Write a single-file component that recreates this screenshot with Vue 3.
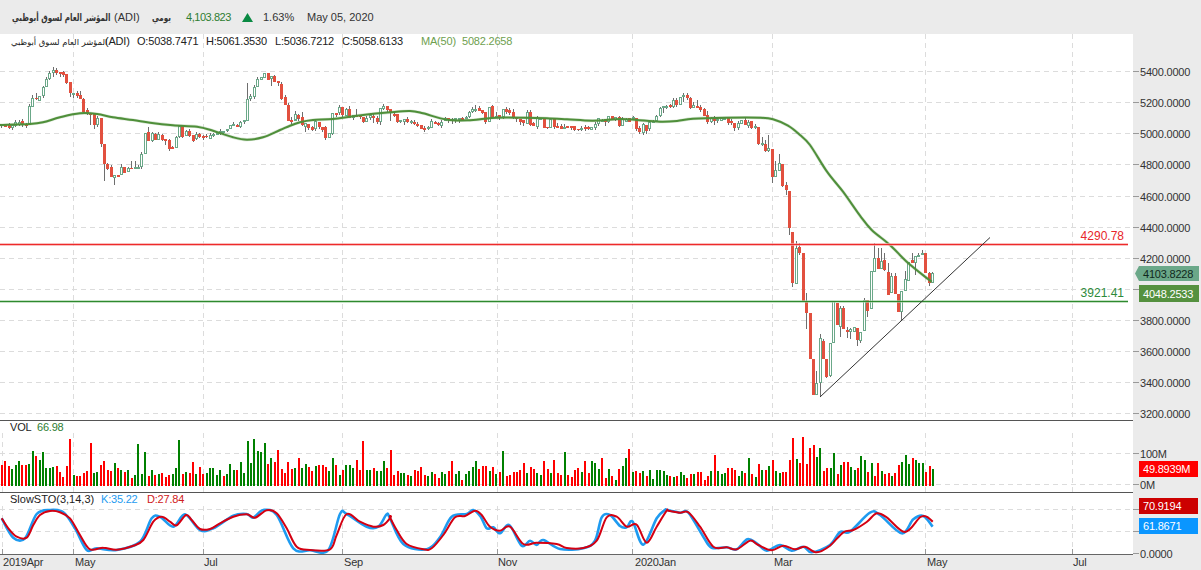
<script setup>
const AR = 'المؤشر العام لسوق أبوظبي'
const W = 1133

// --- candles, read in zoomed crops: colour X top bottom [wickTop wickBottom]
const segs = [
  { x0: 0, y0: 60, d: 'r 5 192 197,r 15 196 200,r 28 196 205,g 38 195 205,g 47 185 197,g 58 186 195,r 67 183 195 178 202,r 78 192 197 188 203,g 88 138 196,g 98 115 140 105 140,r 110 114 118 100 120,g 118 108 122 108 124,g 130 82 108,g 140 58 82,g 149 40 58,g 160 30 40 22 52,r 169 30 40,r 182 37 42 35 52,r 190 36 44 34 52,r 199 42 68,r 211 65 98 65 112,g 220 98 103 98 115,r 232 98 108,r 241 106 116 92 116,r 250 116 156,r 262 150 160 145 165,r 272 160 166 160 195,r 283 160 195 160 207,g 292 174 195,r 304 174 252 174 262,r 313 252 312 252 362,r 322 312 326,r 334 320 350,g 343 345 353 345 375,r 355 345 350 345 352,g 365 322 346 312 346,r 374 322 340,g 385 325 337,r 394 324 328 304 328,g 406 322 326 304 326,g 415 320 325,g 424 283 320,g 436 218 282,r 445 215 243 200 243,g 457 220 242,r 466 222 240,g 475 222 240,r 488 226 240,r 497 236 243 236 255,r 507 240 266,r 517 262 268,g 528 232 265,g 538 198 232,r 547 197 230,g 558 213 228,r 568 213 228,r 579 226 242 226 245,g 588 223 238,r 598 222 230,r 610 228 233,r 620 228 232,g 631 226 236,g 640 222 228,g 651 218 222,g 661 214 220,g 670 212 220,g 682 208 214,g 692 195 208,g 701 192 198,r 712 194 200,g 722 185 200,g 733 181 186,g 743 118 183 70 183,g 752 108 118,g 764 80 110,g 773 58 80,g 784 52 60,g 794 40 55 38 55,r 805 40 60,g 814 48 58 48 78,r 824 48 66,r 835 64 70 64 78,r 845 72 116,r 856 112 136,r 866 136 182,r 875 180 186 180 192,g 886 163 182 152 182,r 896 165 177' },
  { x0: 290, y0: 85, d: 'r 3 105 110 95 115,g 15 88 105 78 105,r 25 90 100,r 37 96 120 82 122,g 46 115 125 115 140,r 55 118 128,r 67 125 135 122 137,g 76 108 132,r 88 110 126,r 97 126 134,r 107 126 160,g 118 145 160,g 127 85 148,r 139 83 90,g 148 66 84,r 157 66 90 66 95,g 168 72 92,r 178 72 98 64 98,g 190 90 98,r 199 90 95 72 95,r 210 90 97,r 220 95 110 95 115,g 229 98 110,g 241 90 100,r 250 92 100 85 115,r 262 98 110,g 271 70 112 70 120,g 280 64 72,r 292 63 75,r 301 72 82 72 108,r 313 87 93,r 322 88 110 88 114,g 331 106 110,g 343 102 110 102 120,r 352 102 112,g 364 108 114,r 373 112 118,r 382 118 122,r 394 120 133,r 403 128 134,g 415 126 130,g 424 108 128,r 436 110 118,r 445 114 121,g 454 110 122,g 465 100 107,r 475 100 105 98 114,g 487 102 105 100 116,g 497 100 104 98 114,g 508 99 105 99 114,r 517 98 104,g 528 97 100,g 537 82 97,g 547 72 82,g 556 72 75 60 82,r 568 70 77,r 577 75 83,r 587 82 110,g 597 65 110' },
  { x0: 480, y0: 85, d: 'r 37 63 96,g 48 92 96 80 98,r 58 91 97 91 104,g 70 73 95,r 80 73 80,r 88 76 84,r 100 82 100 72 102,r 110 98 103 98 112,r 121 102 110 102 120,r 130 105 113 105 122,g 142 82 118,r 151 82 120,r 161 115 122 112 124,g 172 100 125,g 182 100 103,r 193 100 128,r 202 125 130 125 132,g 212 103 128,r 223 102 125,r 232 124 129 115 129,r 244 124 132 118 132,g 253 125 130 118 132,r 263 124 128,r 274 124 129,r 284 124 134 124 138,r 296 132 136,g 304 128 135,r 315 127 131,r 326 127 131,g 335 125 134,g 347 118 128,g 356 100 118,g 366 104 112,r 377 103 112 103 124,g 386 94 112,r 398 94 106,g 407 97 106,r 418 97 122,g 428 103 122,g 438 102 110,r 449 100 110,g 460 97 100,r 470 100 133,r 479 130 140,g 489 118 143,r 500 120 137 120 148,g 509 112 133,g 520 107 112,g 530 92 107,g 540 68 92,g 550 63 68 63 84,g 560 62 65,r 572 60 65,g 581 45 65 40 70' },
  { x0: 660, y0: 85, d: 'r 49 45 60,g 61 37 60 37 60,g 70 30 37 25 50,r 82 30 38,r 91 40 68,g 100 60 68 50 68,r 112 64 70 45 70,r 121 66 74,r 133 72 92,r 142 90 110 78 116,g 154 100 110 95 115,r 163 99 107 92 120,g 172 102 107 100 113,g 184 100 107 96 107,g 193 100 103 96 105,r 205 100 113,r 214 108 115,r 223 115 128 115 138,g 235 115 128,g 244 106 116,r 256 105 120,g 265 112 122,r 274 108 130 108 132,g 286 123 128 118 132,r 295 125 178 125 180,g 307 175 178 155 182,r 316 178 198 165 200,g 325 189 198 150 200,r 337 192 276 192 294,g 346 255 276 228 276,g 358 235 258 208 258,r 367 237 302 237 306,r 379 300 316 290 330,r 388 318 430 318 450' },
  { x0: 760, y0: 230, d: 'r 98 5 160 5 172,g 110 55 163 32 163,r 118 52 69 40 75,r 130 70 214 70 214,r 140 212 250 190 296,r 150 250 388 250 388,r 160 388 494 388 494,g 170 460 494 423 494,g 182 325 460 312 500,r 190 332 388 328 388,r 200 388 440 388 445,g 212 340 437 340 442,g 220 214 340 214 340,r 232 220 285 220 285,g 242 234 292 228 322,r 250 234 298 228 298,r 262 300 306 290 324,g 270 298 307 295 328,g 282 292 305 292 305,r 292 294 330 294 347,g 302 306 332 306 340,g 313 210 304 205 304,r 322 210 242 210 260,g 333 124 238 124 238,g 343 85 127 40 127,r 355 85 117 55 117,g 364 93 116 55 116,r 373 90 120 68 122,r 385 125 194 100 194,g 394 138 190 128 190,r 406 138 193 128 193,r 415 193 245 193 245,g 424 183 245 183 273,g 436 148 182 122 182,g 445 95 152 95 152,r 458 90 100 68 100,g 467 77 100 77 135,g 476 74 76 70 78,g 488 70 74 60 76,r 496 70 128 70 128,r 508 130 160 125 167,g 518 130 160 125 160' },
]

let seed = 7
function rnd() { seed = (seed * 16807) % 2147483647; return seed / 2147483647 }

const candles = []
for (const s of segs) {
  for (const tok of s.d.split(',')) {
    const [c, X, t, b, wt, wb] = tok.split(' ')
    const top = Math.round(s.y0 + t / 3)
    const bot = Math.round(s.y0 + b / 3)
    const px = Math.round(s.x0 + X / 3 - 0.5)
    const wTop = wt !== undefined ? Math.round(s.y0 + wt / 3) : top - Math.floor(rnd() * 3)
    const wBot = wb !== undefined ? Math.round(s.y0 + wb / 3) : bot + Math.floor(rnd() * 3)
    candles.push({ up: c === 'g', px, top, h: Math.max(bot - top, 1), wTop, wBot })
  }
}

// --- curves, read from crops as X Y pairs, then smoothed
function pts(x0, y0, str) {
  const n = str.trim().split(/\s+/).map(Number)
  const out = []
  for (let i = 0; i < n.length; i += 2) out.push([x0 + n[i] / 3, y0 + n[i + 1] / 3])
  return out
}
function smooth(p) {
  const f = (v) => v.toFixed(1)
  let d = `M${f(p[0][0])} ${f(p[0][1])}`
  for (let i = 0; i < p.length - 1; i++) {
    const a = p[Math.max(i - 1, 0)]
    const b = p[i]
    const c = p[i + 1]
    const e = p[Math.min(i + 2, p.length - 1)]
    d += `C${f(b[0] + (c[0] - a[0]) / 6)} ${f(b[1] + (c[1] - a[1]) / 6)} ${f(c[0] - (e[0] - b[0]) / 6)} ${f(c[1] - (e[1] - b[1]) / 6)} ${f(c[0])} ${f(c[1])}`
  }
  return d
}

const maPts = '0,125 30,124 43,122.3 60,117.3 80,113.3 97,114 113,117.3 133,120 150,122.7 173,125.3 197,126.7 213,130.7 233,137.3 247,139.7 263,137.3 280,130 290,125.7 300,122.3 313,120 333,119 357,115.7 390,112.3 410,111 423,113.3 447,119.7 470,120.3 480,119.3 497,117.7 523,117.7 547,118.3 567,119.3 593,120.7 620,119 637,120 660,121.7 677,121 693,118.7 727,117.7 760,117.7 773,119.3 788,125.7 800,135 810,145 827,171.7 843,191.7 860,215.7 871.7,230 890,245 906.7,261.7 928.3,279.3 931,281'
const maLine = smooth(maPts.split(' ').map((s) => s.split(',').map(Number)))

const kLine = smooth([
  ...pts(0, 415, '5 310 40 368 75 370 110 297 150 285 190 292 225 340 260 405 290 400 350 405 420 380 455 310 480 305 520 335 555 298 600 345 640 340 700 302 740 297 760 308 790 285 830 300 880 400 930 406 985 405 1020 297 1040 297 1100 335 1135 335 1160 298'),
  ...pts(390, 430, '0 265 40 342 110 358 150 322 185 260 230 252 250 240 272 260 290 295 310 292 330 310 358 285 395 347 420 332 440 345 460 330 510 357 580 355 615 332 635 262 660 255 690 288 710 292 728 275 760 344 800 265 825 240'),
  ...pts(660, 430, '20 240 60 248 85 248 130 320 155 353 200 352 230 358 262 328 290 340 320 362 360 345 395 362 430 350 455 367 510 345 540 306 570 305 630 248 660 255 725 310 760 268 790 258 818 290'),
])

const dLine = smooth([
  ...pts(0, 415, '5 310 25 340 50 365 80 368 100 330 120 300 150 288 180 292 210 310 240 360 270 403 310 398 350 404 400 392 430 375 460 320 485 305 510 320 530 331 558 300 575 315 600 342 630 342 660 325 700 305 740 298 765 308 800 286 830 295 860 340 890 395 930 405 990 403 1010 360 1040 297 1080 320 1120 335 1150 330 1172 307'),
  ...pts(390, 430, '0 262 20 300 50 342 100 358 125 355 160 315 195 262 225 258 255 242 275 255 300 290 330 302 360 290 400 342 440 338 500 342 530 354 580 354 620 332 650 262 680 260 710 290 740 284 770 338 800 290 830 242'),
  ...pts(660, 430, '25 242 60 248 85 247 120 290 160 350 200 352 230 358 270 332 295 345 335 361 370 347 405 358 435 350 470 367 510 347 550 307 580 300 620 276 650 250 680 262 735 306 780 262 800 260 818 275'),
])

// --- volume: colour + top Y in the crop
const volRows = [
  { base: 212, d: 'r150 r138 r152 g162 g150 g138 r148 r150 g145 g108 r123 g135 g111 g159 g159 g155 r153 r171 r186 r153 r72 g180 r183 r183 r172 r168 r84 g174 g171 r150 r138 r165 r168 g144 r159 g165 r171 g165 r189 g180 g87 g177 g111 r183 g165 r180 g177 r174 r186 r180 g177 g159 g75 r177 g171 r174 r141 g177 r156 r177 g174 g159 g159 g180 g165 r183 g177 g147 g165 r165 g141 g174 g78 g144 g72 g108 g111 g84 r147 g129 r141 r105 r162 r174 r141 r162 g159 r129 g159 g147 r156 r168 g153 r150 r150 r156 g168 g129 r150 g180 r165 g150 g150 g159 r135 r165 r78 g165 g165 r159 g168 g168 g138 r159 r105 r180 r168' },
  { base: 168, d: 'g129 g129 r135 g138 r120 r123 r111 r135 g138 g126 r132 r144 g126 g132 r123 r93 g132 g123 r150 g132 g123 g111 g93 r117 r108 r108 g123 r111 g132 r126 g63 r138 r135 r126 r126 r120 r99 g129 r111 r117 g129 g135 r93 r117 g129 r90 r129 r135 g66 r135 r141 r120 r114 g126 r93 r129 g93 g99 g117 r84 r144 g117 r138 g150 r117 g108 g84 r57 g126 r123 r129 g123 r138 g120 g147 g120 g120' },
  { base: 168, d: 'g123 g135 r138 g141 r138 g126 g135 r144 r132 g132 r126 r126 r150 r138 g123 r75 g123 g132 g129 r114 r114 r120 g138 g123 r129 g84 r132 g141 r102 g120 r120 g108 r90 g123 g129 r126 r126 r90 r24 g87 r99 r21 r102 r54 r45 g81 g54 r123 r114 g114 g69 r132 g105 r96 r96 g111 g120 r114 g78 g90 r126 g99 r138 r99 g123 r132 r129 g138 r129 r105 g96 g75 g102 r84 g90 g99 g99 r126 r108 g117' },
]
const volBottom = 486
const volTokens = volRows.flatMap((r) =>
  r.d.split(' ').map((t) => ({ up: t[0] === 'g', h: Math.max(1, Math.round((r.base - Number(t.slice(1))) / 3)) }))
)
const volStep = (932 - 1) / (volTokens.length - 1)
const bars = volTokens.map((b, i) => ({
  up: b.up,
  x: Math.round(1 + i * volStep),
  y: volBottom - b.h,
  h: b.h,
}))

// --- grids and axes
const vGrid = [2.5, 73.5, 203.5, 342.5, 497.5, 632.5, 772.5, 925.5, 1072.5]
const mainGrid = vGrid.slice(1)
const prices = [5400, 5200, 5000, 4800, 4600, 4400, 4200, 4000, 3800, 3600, 3400, 3200].map((p, i) => ({
  label: p.toFixed(4),
  y: Math.round(71 + 31.13 * i) + 0.5,
}))
const volAxis = [
  { label: '100M', y: 453.5 },
  { label: '0M', y: 484.5 },
]
const stoGrid = [509.5, 531.5]
const stoAxis = [
  { label: '', y: 509.5 },
  { label: '', y: 531.5 },
  { label: '0.0000', y: 553.5 },
]
const months = [
  { t: '2019Apr', x: 3 },
  { t: 'May', x: 75 },
  { t: 'Jul', x: 204 },
  { t: 'Sep', x: 344 },
  { t: 'Nov', x: 498 },
  { t: '2020Jan', x: 635 },
  { t: 'Mar', x: 774 },
  { t: 'May', x: 927 },
  { t: 'Jul', x: 1073 },
]
</script>

<template>
  <div class="page">
    <header class="topbar">
      <span class="name">{{ AR }}</span>
      <span class="code">(ADI)</span>
      <span class="period">يومي</span>
      <span class="last">4,103.823</span>
      <svg class="arrow" width="11" height="9" viewBox="0 0 11 9"><path d="M5.5 0 11 9H0Z" /></svg>
      <span class="pct">1.63%</span>
      <span class="date">May 05, 2020</span>
    </header>

    <!-- price pane -->
    <section class="pane main-pane">
      <svg class="plot" :width="W" height="386" :viewBox="`0 34 ${W} 386`">
        <line v-for="p in prices" :key="p.y" class="grid" x1="0" :x2="W" :y1="p.y" :y2="p.y" />
        <line v-for="x in mainGrid" :key="x" class="grid" :x1="x" :x2="x" y1="34" y2="420" />

        <g v-for="(c, i) in candles" :key="i">
          <line class="wick" :x1="c.px + 0.5" :x2="c.px + 0.5" :y1="c.wTop" :y2="c.wBot" />
          <rect v-if="c.up" class="up" :x="c.px - 0.5" :y="c.top + 0.5" width="2" :height="Math.max(c.h - 1, 1)" />
          <rect v-else class="down" :x="c.px - 1" :y="c.top" width="3" :height="c.h" />
        </g>

        <path class="ma-halo" :d="maLine" />
        <path class="ma" :d="maLine" />

        <rect class="fib-red-halo" x="0" y="243" width="1128" height="3" />
        <rect class="fib-red" x="0" y="244" width="1128" height="1" />
        <rect class="fib-green-halo" x="0" y="300" width="1128" height="3" />
        <rect class="fib-green" x="0" y="301" width="1128" height="1" />
        <line class="trend" x1="820" y1="397" x2="990" y2="237.5" />

        <text class="fib-txt red" x="1124" y="240" text-anchor="end">4290.78</text>
        <text class="fib-txt green" x="1124" y="297" text-anchor="end">3921.41</text>

        <text class="lg lg-ar" x="11" y="45">{{ AR }}</text>
        <text class="lg" x="105" y="45">(ADI)</text>
        <text class="lg" x="137" y="45">O:5038.7471</text>
        <text class="lg" x="206" y="45">H:5061.3530</text>
        <text class="lg" x="275" y="45">L:5036.7212</text>
        <text class="lg" x="342" y="45">C:5058.6133</text>
        <text class="lg ma-lg" x="421" y="45">MA(50)</text>
        <text class="lg ma-lg" x="462" y="45">5082.2658</text>
      </svg>
      <svg class="axis" width="68" height="386" :viewBox="`${W} 34 68 386`">
        <g v-for="p in prices" :key="p.y">
          <line class="tick" :x1="W" :x2="W + 6" :y1="p.y" :y2="p.y" />
          <text class="ax" :x="W + 7" :y="p.y + 4">{{ p.label }}</text>
        </g>
        <path class="tag-last" d="M1135 273.5 1139 266H1199V281H1139Z" />
        <text class="tag-txt dark" x="1143" y="277.5">4103.8228</text>
        <rect class="tag-ma" x="1139" y="285" width="60" height="17" />
        <text class="tag-txt" x="1143" y="297.5">4048.2533</text>
      </svg>
    </section>

    <!-- volume pane -->
    <section class="pane vol-pane">
      <svg class="plot" :width="W" height="72" :viewBox="`0 420 ${W} 72`">
        <line class="sep" x1="0" :x2="W" y1="420.5" y2="420.5" />
        <line v-for="a in volAxis" :key="a.y" class="grid" x1="0" :x2="W" :y1="a.y" :y2="a.y" />
        <line v-for="x in vGrid" :key="x" class="grid" :x1="x" :x2="x" y1="433" y2="492" />
        <rect v-for="(b, i) in bars" :key="i" :class="b.up ? 'vol-up' : 'vol-down'" :x="b.x" :y="b.y" width="2" :height="b.h" />
        <text class="lg" x="10" y="431">VOL</text>
        <text class="lg vol-val" x="37" y="431">66.98</text>
      </svg>
      <svg class="axis" width="68" height="72" :viewBox="`${W} 420 68 72`">
        <g v-for="a in volAxis" :key="a.y">
          <line class="tick" :x1="W" :x2="W + 6" :y1="a.y" :y2="a.y" />
          <text class="ax" :x="W + 7" :y="a.y + 4">{{ a.label }}</text>
        </g>
        <rect class="tag-red" x="1139" y="461" width="59" height="16" />
        <text class="tag-txt" x="1143" y="473">49.8939M</text>
      </svg>
    </section>

    <!-- stochastic pane -->
    <section class="pane sto-pane">
      <svg class="plot" :width="W" height="63" :viewBox="`0 492 ${W} 63`">
        <line class="sep" x1="0" :x2="W" y1="492.5" y2="492.5" />
        <line v-for="y in stoGrid" :key="y" class="grid" x1="0" :x2="W" :y1="y" :y2="y" />
        <line v-for="x in vGrid" :key="x" class="grid" :x1="x" :x2="x" y1="506" y2="550" />
        <line v-for="x in vGrid" :key="'t' + x" class="sto-tick" :x1="x" :x2="x" y1="549" y2="554" />
        <path class="k" :d="kLine" />
        <path class="d" :d="dLine" />
        <rect class="sep-rect" x="0" y="554" :width="W" height="1" />
        <text class="lg sto-name" x="10" y="503">SlowSTO(3,14,3)</text>
        <text class="lg k-lg" x="101" y="503">K:35.22</text>
        <text class="lg d-lg" x="147" y="503">D:27.84</text>
      </svg>
      <svg class="axis axis-over" width="68" height="63" :viewBox="`${W} 492 68 63`">
        <g v-for="a in stoAxis" :key="a.y">
          <line class="tick" :x1="W" :x2="W + 6" :y1="a.y" :y2="a.y" />
          <text v-if="a.label" class="ax" :x="W + 7" :y="a.y + 4">{{ a.label }}</text>
        </g>
        <rect class="tag-dred" x="1139" y="498" width="59" height="16" />
        <text class="tag-txt" x="1143" y="510">70.9194</text>
        <rect class="tag-blue" x="1139" y="518" width="59" height="16" />
        <text class="tag-txt" x="1143" y="530">61.8671</text>
      </svg>
    </section>

    <!-- time axis -->
    <svg class="xaxis" width="1201" height="15" viewBox="0 555 1201 15">
      <text v-for="m in months" :key="m.x" class="ax" :x="m.x" y="565.5">{{ m.t }}</text>
    </svg>
  </div>
</template>

<style scoped>
.page {
  width: 1201px;
  height: 570px;
  display: flex;
  flex-direction: column;
  overflow: hidden;
  background: #ebebeb;
  font-family: Tahoma, "Liberation Sans", "DejaVu Sans", sans-serif;
  font-size: 11px;
  color: #333;
}
.topbar {
  height: 34px;
  flex: none;
  display: flex;
  align-items: center;
  padding-left: 12px;
  font-size: 11px;
  color: #333;
}
.name,
.period {
  font-family: "DejaVu Sans", sans-serif;
  font-size: 10px;
  font-weight: bold;
  white-space: nowrap;
  transform-origin: left center;
  transform: scaleX(0.72);
}
.name { width: 98px; }
.period { width: 20px; margin-left: 12px; }
.code { margin-left: 4px; width: 26px; }
.last { margin-left: 14px; color: #2e7d32; letter-spacing: -0.45px; width: 46px; }
.arrow { margin-left: 10px; }
.arrow path { fill: #0a8a43; }
.pct { margin-left: 10px; width: 30px; }
.date { margin-left: 14px; }

.pane { display: flex; flex: none; }
.main-pane { height: 386px; }
.vol-pane { height: 72px; }
.sto-pane { height: 63px; }
.plot { display: block; background: #fff; flex: none; }
.axis { display: block; flex: none; }
.axis-over { overflow: visible; }
.xaxis { display: block; flex: none; }

.grid { stroke: #dcdcdc; stroke-width: 1; stroke-dasharray: 5 4; shape-rendering: crispEdges; }
.tick { stroke: #999; stroke-width: 1; shape-rendering: crispEdges; }
.sto-tick { stroke: #999; stroke-width: 1; shape-rendering: crispEdges; }
.sep { stroke: #555; stroke-width: 1; shape-rendering: crispEdges; }
.sep-rect { fill: #666; }

.wick { stroke: #6e6e6e; stroke-width: 1; shape-rendering: crispEdges; }
.up { fill: #fff; stroke: #6ba889; stroke-width: 1; shape-rendering: crispEdges; }
.down { fill: #e2503f; shape-rendering: crispEdges; }

.ma, .ma-halo { fill: none; stroke-linejoin: round; stroke-linecap: round; }
.ma { stroke: #4f8f3a; stroke-width: 2; }
.ma-halo { stroke: #4f8f3a; stroke-opacity: 0.22; stroke-width: 3.2; }

.fib-red { fill: #ee2a2a; }
.fib-red-halo { fill: #f5a3a3; opacity: 0.7; }
.fib-green { fill: #2e8a2e; }
.fib-green-halo { fill: #9fcb9f; opacity: 0.6; }
.trend { stroke: #333; stroke-width: 1; }

.lg, .ax, .tag-txt, .fib-txt {
  font-family: Tahoma, "Liberation Sans", "DejaVu Sans", sans-serif;
  font-size: 11px;
  letter-spacing: -0.2px;
}
.lg { fill: #222; }
.lg-ar { font-family: "DejaVu Sans", sans-serif; font-size: 8.4px; letter-spacing: 0; }
.ax { fill: #333; }
.fib-txt { font-size: 12px; letter-spacing: 0; }
.fib-txt.red { fill: #e8262a; }
.fib-txt.green { fill: #2e8a3a; }
.ma-lg { fill: #6ea04f; }
.vol-val { fill: #2e7d32; }
.sto-name { letter-spacing: 0; }
.k-lg { fill: #1e9bf0; }
.d-lg { fill: #d02020; }

.vol-up { fill: #008000; shape-rendering: crispEdges; }
.vol-down { fill: #ff0000; shape-rendering: crispEdges; }

.k { fill: none; stroke: #1e9bf0; stroke-width: 2.6; stroke-linejoin: round; }
.d { fill: none; stroke: #d40012; stroke-width: 2; stroke-linejoin: round; }

.tag-last { fill: #6ba889; }
.tag-ma { fill: #55913f; }
.tag-red { fill: #ff0000; }
.tag-dred { fill: #cc0000; }
.tag-blue { fill: #0a96ff; }
.tag-txt { fill: #fff; }
.tag-txt.dark { fill: #10281c; }
</style>
